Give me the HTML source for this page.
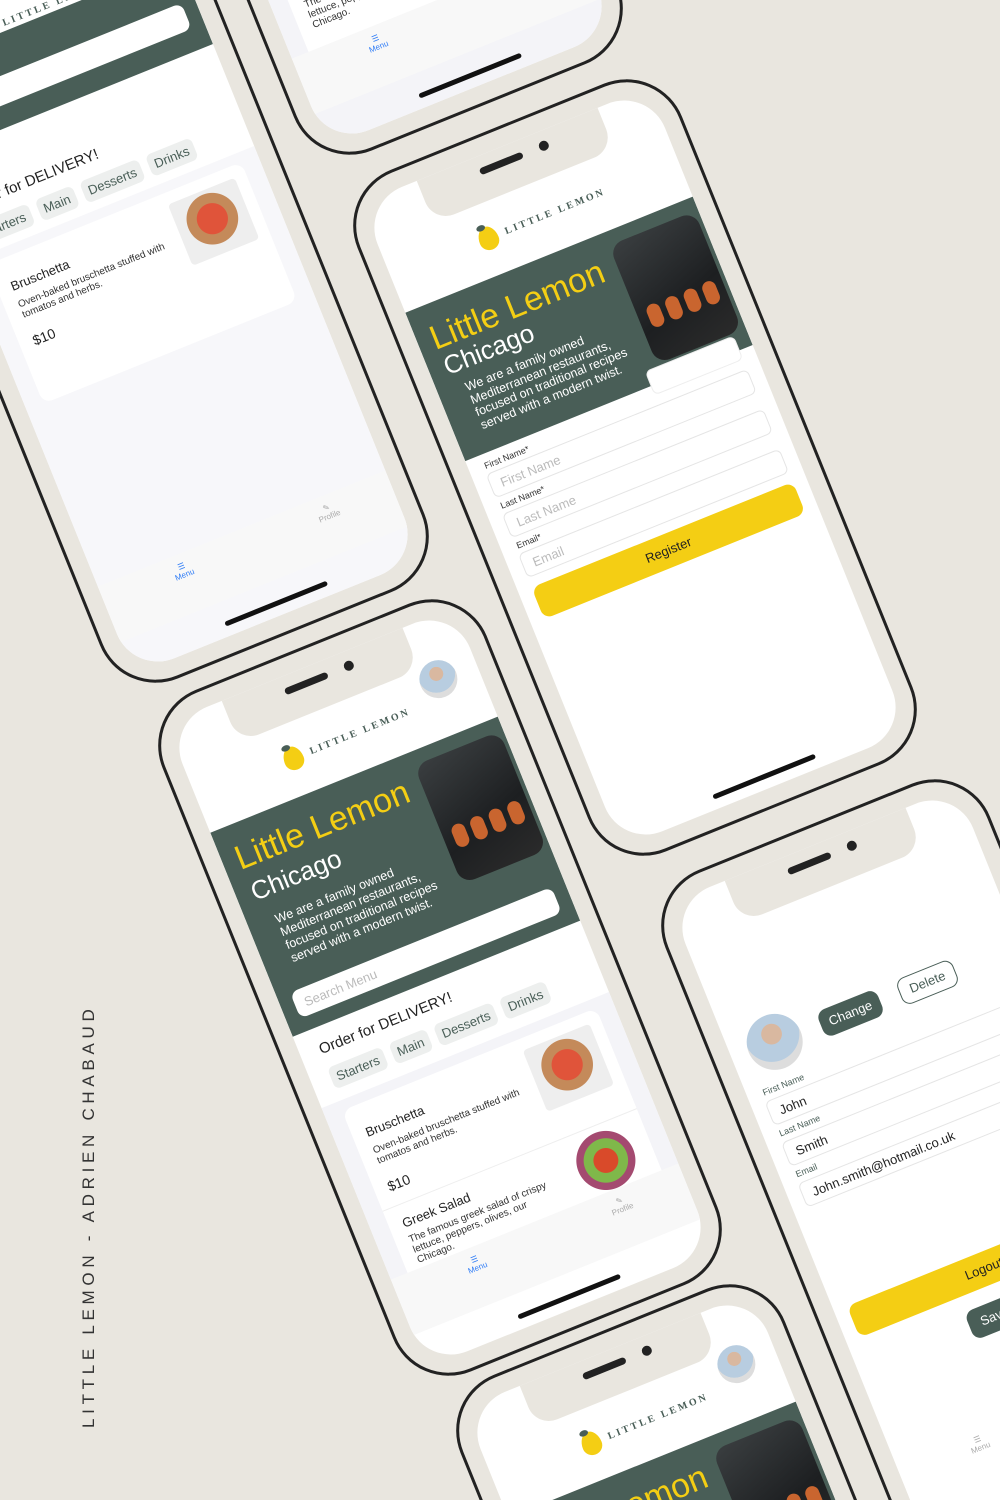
<!DOCTYPE html>
<html style="overflow:hidden;height:1500px"><head><meta charset="utf-8">
<style>
*{box-sizing:border-box;margin:0;padding:0}
html,body{width:1000px;height:1500px;overflow:hidden}
body{background:#E9E6DF;font-family:"Liberation Sans",sans-serif;color:#333}
#wrap{position:relative;width:1000px;height:1500px;overflow:hidden;background:#E9E6DF}
.phone{position:absolute;width:350px;height:735px;border:3px solid #222;border-radius:60px;background:#E9E6DF;transform:rotate(-22deg)}
.screen{position:absolute;left:17px;top:17px;right:17px;bottom:17px;background:#fff;border-radius:44px;overflow:hidden}
.notch{position:absolute;left:60px;top:-5px;width:195px;height:50px;background:#E9E6DF;border-radius:0 0 22px 22px}
.spk{position:absolute;left:62px;top:17px;width:46px;height:7px;background:#222;border-radius:4px}
.cam{position:absolute;left:126px;top:15px;width:10px;height:10px;background:#222;border-radius:50%}
.logo{position:absolute;left:95px;top:68px;display:flex;align-items:center;gap:8px;font-family:"Liberation Serif",serif;font-weight:bold;font-size:10px;letter-spacing:2.5px;color:#495E57}
.lemon{width:20px;height:24px;background:#F4CE14;border-radius:50% 50% 50% 50%/60% 60% 40% 40%;position:relative}
.lemon:before{content:"";position:absolute;left:2px;top:-3px;width:9px;height:6px;background:#495E57;border-radius:50%}
.avatar{position:absolute;right:22px;top:42px;width:38px;height:38px;border-radius:50%;background:radial-gradient(circle at 50% 35%,#d9b8a0 0 22%,#b8cde0 23% 60%,#ddd 61%)}
.hero{position:absolute;left:0;right:0;top:118px;height:220px;background:#495E57;color:#fff}
.h1{position:absolute;left:14px;top:16px;font-size:34px;color:#F4CE14}
.h2{position:absolute;left:16px;top:56px;font-size:26px}
.desc{position:absolute;left:28px;top:98px;width:180px;font-size:12.5px;line-height:14px}
.himg{position:absolute;left:214px;top:14px;width:92px;height:128px;border-radius:14px;background:linear-gradient(160deg,#3a3e40,#1d1f21 60%,#2b2b2b)}
.himg i{position:absolute;width:14px;height:24px;border-radius:7px;background:#c9652f;top:70px}
.search{position:absolute;left:14px;right:14px;top:178px;height:28px;background:#fff;border-radius:8px;color:#bbb;font-size:13px;padding:7px 10px}
.order{position:absolute;left:20px;top:352px;font-size:15px;color:#222}
.pills{position:absolute;left:20px;top:380px;display:flex;gap:8px}
.pills span{background:#EDEFEE;color:#495E57;font-size:13px;padding:4px 6px;border-radius:6px}
.list{position:absolute;left:0;right:0;top:415px;height:240px;background:#F4F4F8}
.card{position:absolute;left:18px;right:18px;top:10px;height:230px;background:#fff;border-radius:10px}
.card .t{position:absolute;left:14px;top:22px;font-size:13px;color:#222}
.card .d{position:absolute;left:14px;top:44px;width:160px;font-size:10px;color:#333}
.card .p{position:absolute;left:14px;top:80px;font-size:14px;color:#222}
.fimg{position:absolute;right:12px;top:12px;width:72px;height:66px;border-radius:4px;background:radial-gradient(circle at 50% 45%,#e0543a 0 30%,#c48a5a 31% 50%,#eee 51%)}
.tab{position:absolute;left:0;right:0;top:600px;height:60px;background:#F8F8F8}
.tab .m{position:absolute;left:75px;top:8px;color:#2f7cf6;font-size:8px;text-align:center}
.tab .pr{position:absolute;left:230px;top:8px;color:#aaa;font-size:8px;text-align:center}
.home{position:absolute;left:104px;bottom:10px;width:110px;height:5px;background:#111;border-radius:3px}
.lbl{position:absolute;font-size:9px;color:#333}
.fld{position:absolute;left:14px;right:14px;height:26px;border:1px solid #e5e5e5;border-radius:6px;font-size:13px;color:#bbb;padding:5px 10px;background:#fff}
.btn{position:absolute;border-radius:9px;font-size:13px;text-align:center}
.side{position:absolute;left:79px;top:1428px;transform:rotate(-90deg);transform-origin:0 0;font-size:17px;letter-spacing:4.7px;color:#333;white-space:nowrap}
</style></head><body><div id="wrap">

<div class="side">LITTLE LEMON - ADRIEN CHABAUD</div>

<!-- top-left phone -->
<div class="phone" style="left:-28px;top:-73px">
 <div class="screen">
  <div class="logo" style="top:30px"><div class="lemon"></div>LITTLE LEMON</div>
  <div class="hero" style="top:50px;height:90px"><div class="search" style="top:40px"></div></div>
  <div class="order" style="top:190px">Order for DELIVERY!</div>
  <div class="pills" style="top:218px"><span>Starters</span><span>Main</span><span>Desserts</span><span>Drinks</span></div>
  <div class="list" style="top:250px;height:500px;background:#F7F7FA"><div class="card" style="height:150px"><div class="t">Bruschetta</div><div class="d">Oven-baked bruschetta stuffed with tomatos and herbs.</div><div class="p">$10</div><div class="fimg"></div></div></div>
  <div class="tab"><div class="m">☰<br>Menu</div><div class="pr">✎<br>Profile</div></div>
  <div class="home"></div>
 </div>
</div>

<!-- top phone -->
<div class="phone" style="left:166px;top:-601px">
 <div class="screen">
  <div class="list" style="top:460px;height:300px"><div class="card" style="top:60px;height:100px"><div class="t" style="top:10px">Greek Salad</div><div class="d" style="top:30px">The famous greek salad of crispy lettuce, peppers, olives, our Chicago.</div></div></div>
  <div class="tab"><div class="m">☰<br>Menu</div><div class="pr">✎<br>Profile</div></div>
  <div class="home"></div>
 </div>
</div>

<!-- register phone -->
<div class="phone" style="left:460px;top:100px">
 <div class="screen">
  <div class="notch"><div class="spk"></div><div class="cam"></div></div>
  <div class="logo"><div class="lemon"></div>LITTLE LEMON</div>
  <div class="hero" style="height:160px">
   <div class="h1">Little Lemon</div><div class="h2" style="top:50px">Chicago</div>
   <div class="desc" style="top:86px;line-height:13.5px">We are a family owned Mediterranean restaurants, focused on traditional recipes served with a modern twist.</div>
   <div class="himg"><i style="left:10px"></i><i style="left:30px"></i><i style="left:50px"></i><i style="left:70px"></i></div>
  </div>
  <div class="fld" style="top:262px;border-color:#eee;left:200px"></div>
  <div class="lbl" style="left:16px;top:285px">First Name*</div>
  <div class="fld" style="top:298px">First Name</div>
  <div class="lbl" style="left:16px;top:328px">Last Name*</div>
  <div class="fld" style="top:341px">Last Name</div>
  <div class="lbl" style="left:16px;top:371px">Email*</div>
  <div class="fld" style="top:384px">Email</div>
  <div class="btn" style="left:14px;right:14px;top:420px;height:34px;background:#F4CE14;color:#222;padding:9px">Register</div>
  <div class="home"></div>
 </div>
</div>

<!-- menu phone -->
<div class="phone" style="left:265px;top:620px">
 <div class="screen">
  <div class="notch"><div class="spk"></div><div class="cam"></div></div>
  <div class="logo"><div class="lemon"></div>LITTLE LEMON</div>
  <div class="avatar"></div>
  <div class="hero">
   <div class="h1">Little Lemon</div><div class="h2">Chicago</div>
   <div class="desc">We are a family owned Mediterranean restaurants, focused on traditional recipes served with a modern twist.</div>
   <div class="himg"><i style="left:10px"></i><i style="left:30px"></i><i style="left:50px"></i><i style="left:70px"></i></div>
   <div class="search">Search Menu</div>
  </div>
  <div class="order">Order for DELIVERY!</div>
  <div class="pills"><span>Starters</span><span>Main</span><span>Desserts</span><span>Drinks</span></div>
  <div class="list">
   <div class="card">
    <div class="t">Bruschetta</div><div class="d">Oven-baked bruschetta stuffed with tomatos and herbs.</div><div class="p">$10</div><div class="fimg"></div>
    <div style="position:absolute;left:0;right:0;top:108px;height:1px;background:#eee"></div>
    <div class="t" style="top:120px">Greek Salad</div><div class="d" style="top:140px">The famous greek salad of crispy lettuce, peppers, olives, our Chicago.</div>
    <div class="fimg" style="top:112px;background:radial-gradient(circle at 50% 50%,#d94a2a 0 25%,#7fb84a 26% 45%,#a44a70 46% 60%,#fff 61%)"></div>
   </div>
  </div>
  <div class="tab"><div class="m">☰<br>Menu</div><div class="pr">✎<br>Profile</div></div>
  <div class="home"></div>
 </div>
</div>

<!-- profile phone -->
<div class="phone" style="left:768px;top:800px">
 <div class="screen">
  <div class="notch"><div class="spk"></div><div class="cam"></div></div>
  <div style="position:absolute;left:18px;top:140px;width:56px;height:56px;border-radius:50%;background:radial-gradient(circle at 50% 35%,#d9b8a0 0 22%,#b8cde0 23% 60%,#ddd 61%)"></div>
  <div class="btn" style="left:95px;top:156px;width:64px;height:28px;background:#495E57;color:#fff;padding:6px">Change</div>
  <div class="btn" style="left:180px;top:156px;width:60px;height:28px;border:1px solid #495E57;color:#495E57;padding:5px">Delete</div>
  <div class="lbl" style="left:16px;top:206px;color:#495E57">First Name</div>
  <div class="fld" style="top:220px;color:#222">John</div>
  <div class="lbl" style="left:16px;top:250px;color:#495E57">Last Name</div>
  <div class="fld" style="top:264px;color:#222">Smith</div>
  <div class="lbl" style="left:16px;top:294px;color:#495E57">Email</div>
  <div class="fld" style="top:308px;color:#222">John.smith@hotmail.co.uk</div>
  <div class="btn" style="left:14px;right:14px;top:440px;height:34px;background:#F4CE14;color:#222;padding:9px">Logout</div>
  <div class="btn" style="left:120px;top:490px;width:110px;height:30px;background:#495E57;color:#fff;padding:7px">Save Changes</div>
  <div class="tab" style="background:#fff"><div class="m" style="color:#aaa">☰<br>Menu</div></div>
 </div>
</div>

<!-- bottom phone -->
<div class="phone" style="left:563px;top:1305px">
 <div class="screen">
  <div class="notch"><div class="spk"></div><div class="cam"></div></div>
  <div class="logo"><div class="lemon"></div>LITTLE LEMON</div>
  <div class="avatar"></div>
  <div class="hero">
   <div class="h1">Little Lemon</div><div class="h2">Chicago</div>
   <div class="himg"><i style="left:10px"></i><i style="left:30px"></i><i style="left:50px"></i><i style="left:70px"></i></div>
  </div>
 </div>
</div>

</div></body></html>
